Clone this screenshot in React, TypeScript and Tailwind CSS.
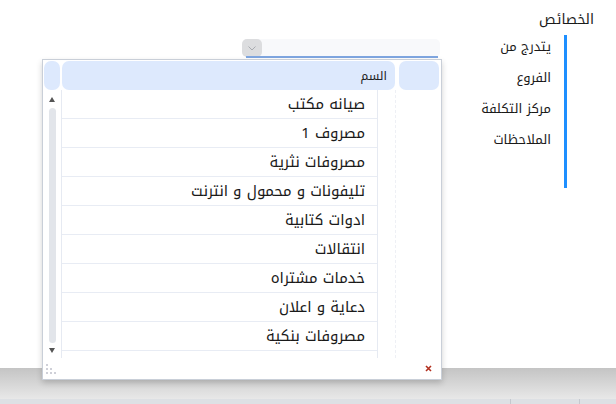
import React from 'react';

const rows = [
  'صيانه مكتب',
  'مصروف 1',
  'مصروفات نثرية',
  'تليفونات و محمول و انترنت',
  'ادوات كتابية',
  'انتقالات',
  'خدمات مشتراه',
  'دعاية و اعلان',
  'مصروفات بنكية',
];

const props = ['يتدرج من', 'الفروع', 'مركز التكلفة', 'الملاحظات'];

function Lookup() {
  return (
    <div className="absolute left-[42px] top-[59px] w-[400px] h-[321px] bg-white border border-[#c9cfd8] shadow-[0_3px_6px_rgba(0,0,0,0.18)] flex flex-col">
      <div className="flex flex-1 min-h-0">
        {/* scroller column */}
        <div className="w-[18px] flex flex-col items-center pt-[1px]">
          <div className="w-[16px] h-[29px] rounded-[7px] bg-[#dde9fd]" />
          <div className="mt-[7px] w-0 h-0 border-l-[3.5px] border-r-[3.5px] border-b-[5px] border-l-transparent border-r-transparent border-b-[#555]" />
          <div className="mt-[6px] w-[7px] h-[235px] rounded-full bg-[#e2e5ea]" />
          <div className="mt-[5px] w-0 h-0 border-l-[3.5px] border-r-[3.5px] border-t-[5px] border-l-transparent border-r-transparent border-t-[#555]" />
        </div>
        {/* grid */}
        <div className="flex-1 flex flex-col pt-[1px]">
          <div className="flex h-[29px] gap-[4px] pl-[1px] pr-[2px]">
            <div className="flex-1 rounded-[7px] bg-[#dde9fd] flex items-center justify-end pr-[8px] text-[12px] text-[#222]">
              <span dir="rtl">السم</span>
            </div>
            <div className="w-[40px] rounded-[7px] bg-[#dde9fd]" />
          </div>
          <div className="flex flex-1 border-l border-[#e6eaf2]">
            <div className="w-[316px] border-r border-[#e6eaf2] flex flex-col">
              {rows.map((r) => (
                <div
                  key={r}
                  dir="rtl"
                  className="h-[29px] border-b border-[#e8ecf4] flex items-center pr-[12px] text-[15px] text-[#1a1a1a]"
                >
                  {r}
                </div>
              ))}
            </div>
            <div className="w-[18px] border-r border-dashed border-[#eef0f5]" />
            <div className="flex-1" />
          </div>
        </div>
      </div>
      <div className="h-[21px] flex items-center justify-between pl-[3px] pr-[9px] pb-[1px]">
        <svg width="12" height="12" viewBox="0 0 12 12">
          <rect x="0" y="2" width="2" height="2" fill="#cfd0d8" />
          <rect x="0" y="6" width="2" height="2" fill="#cfd0d8" />
          <rect x="4" y="6" width="2" height="2" fill="#cfd0d8" />
          <rect x="0" y="10" width="2" height="2" fill="#cfd0d8" />
          <rect x="4" y="10" width="2" height="2" fill="#cfd0d8" />
          <rect x="8" y="10" width="2" height="2" fill="#cfd0d8" />
        </svg>
        <svg width="7" height="7" viewBox="0 0 7 7">
          <path d="M1 1L6 6M6 1L1 6" stroke="#b3301f" strokeWidth="1.6" />
        </svg>
      </div>
    </div>
  );
}

export default function App() {
  return (
    <div className="w-[616px] h-[404px] flex flex-col bg-white overflow-hidden font-['Noto_Kufi_Arabic','DejaVu_Sans',sans-serif]">
      <div className="relative h-[368px] flex">
        <div className="w-[242px]" />
        <div className="w-[198px] pt-[39px]">
          <div className="relative h-[18px] rounded-[5px] bg-[#f8f9fb]">
            <div className="absolute left-0 top-0 w-[20px] h-[18px] rounded-[5px] bg-[#dcdddf] flex items-center justify-center">
              <svg width="8" height="5" viewBox="0 0 8 5">
                <path d="M0.5 0.5L4 4L7.5 0.5" fill="none" stroke="#a8abb0" strokeWidth="1" />
              </svg>
            </div>
            <div className="absolute left-[4px] right-[2px] bottom-[-1px] h-[2px] bg-[#7fa6e0]" />
          </div>
        </div>
        <div className="flex-1 flex flex-col items-end pr-[22px] pt-[10px]">
          <div dir="rtl" className="text-[14px] text-[#1a1a1a] leading-[20px]">الخصائص</div>
          <div className="flex mt-[5px] mr-[27px]">
            <div dir="rtl" className="flex flex-col items-start pt-[2px] pr-[13px] gap-[11px] text-[13px] text-[#1a1a1a] leading-[20px]">
              {props.map((p) => (
                <div key={p}>{p}</div>
              ))}
            </div>
            <div className="w-[3px] h-[153px] bg-[#1e8fff]" />
          </div>
        </div>
        <Lookup />
      </div>
      <div className="h-[31px] bg-gradient-to-b from-[#c4c4c4] to-[#e8e8e8]" />
      <div className="flex-1 bg-[#dde0e4] flex">
        <div className="w-[511px] border-r border-[#c4c8ce]" />
        <div className="w-[69px] border-r border-[#c4c8ce]" />
      </div>
    </div>
  );
}
